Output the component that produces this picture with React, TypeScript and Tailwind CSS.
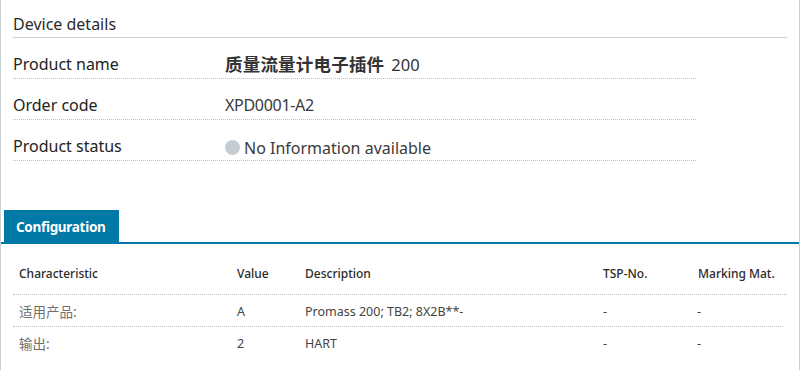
import React from "react";

const font = { fontFamily: '"Noto Sans", "Noto Sans CJK SC", sans-serif' };

const rows = [
  ["适用产品:", "A", "Promass 200; TB2; 8X2B**-", "-", "-"],
  ["输出:", "2", "HART", "-", "-"],
];

export default function App() {
  return (
    <div
      className="w-[800px] h-[370px] bg-white border-l border-r border-[#c8d0d8] overflow-hidden text-[#222]"
      style={font}
    >
      <div className="ml-[12px] mr-[12px] pt-[13px] pb-[2px] border-b border-[#c8d0d8] text-[16px] leading-[22px] text-[#2a2a2a]">
        Device details
      </div>
      <div className="ml-[12px] w-[683px]">
        <div className="flex h-[41px] pt-[15px] border-b border-dotted border-[#b8c2cc] text-[16px] leading-[22px]">
          <div className="w-[212px] text-[#222]">Product name</div>
          <div className="flex items-baseline text-[#333]">
            <span className="font-bold text-[17.5px] leading-[22px] tracking-[0.2px]">质量流量计电子插件</span>
            <span className="ml-[7px] text-[16.5px]">200</span>
          </div>
        </div>
        <div className="flex h-[41px] pt-[15px] border-b border-dotted border-[#b8c2cc] text-[16px] leading-[22px]">
          <div className="w-[212px] text-[#222]">Order code</div>
          <div className="text-[#3a3a3a] tracking-[-0.3px]">XPD0001-A2</div>
        </div>
        <div className="flex h-[41px] pt-[15px] border-b border-dotted border-[#b8c2cc] text-[16px] leading-[22px]">
          <div className="w-[212px] text-[#222]">Product status</div>
          <div className="flex items-center text-[#3a3a3a]">
            <span className="inline-block w-[15px] h-[15px] rounded-full bg-[#c5cdd4] mr-[4px]" />
            No Information available
          </div>
        </div>
      </div>

      <div className="mt-[49px] border-b-2 border-[#0079a7]">
        <div className="ml-[3px] w-[115px] h-[32px] bg-[#0079a7] text-white font-bold text-[13.5px] leading-[32px] pt-[1px] pl-[12px] tracking-[-0.3px]">
          Configuration
        </div>
      </div>

      <div className="ml-[12px] w-[774px] text-[12px]">
        <div className="flex h-[51px] pt-[22px] border-b border-dotted border-[#b8c2cc] leading-[16px] font-medium text-[#2a2a2a]">
          <div className="w-[218px] pl-[6px]">Characteristic</div>
          <div className="w-[68px] pl-[6px]">Value</div>
          <div className="w-[298px] pl-[6px]">Description</div>
          <div className="w-[95px] pl-[6px]">TSP-No.</div>
          <div className="flex-1 pl-[6px]">Marking Mat.</div>
        </div>
        {rows.map((r, i) => (
          <div
            key={i}
            className={
              "flex h-[32px] pt-[9px] leading-[16px] text-[12.5px] text-[#444] " +
              (i === 0 ? "border-b border-dotted border-[#b8c2cc] w-[770px]" : "")
            }
          >
            <div className="w-[218px] pl-[6px] text-[#707070] text-[13.5px]">{r[0]}</div>
            <div className="w-[68px] pl-[6px]">{r[1]}</div>
            <div className="w-[298px] pl-[6px]">{r[2]}</div>
            <div className="w-[94px] pl-[6px]">{r[3]}</div>
            <div className="flex-1 pl-[6px]">{r[4]}</div>
          </div>
        ))}
      </div>
    </div>
  );
}
